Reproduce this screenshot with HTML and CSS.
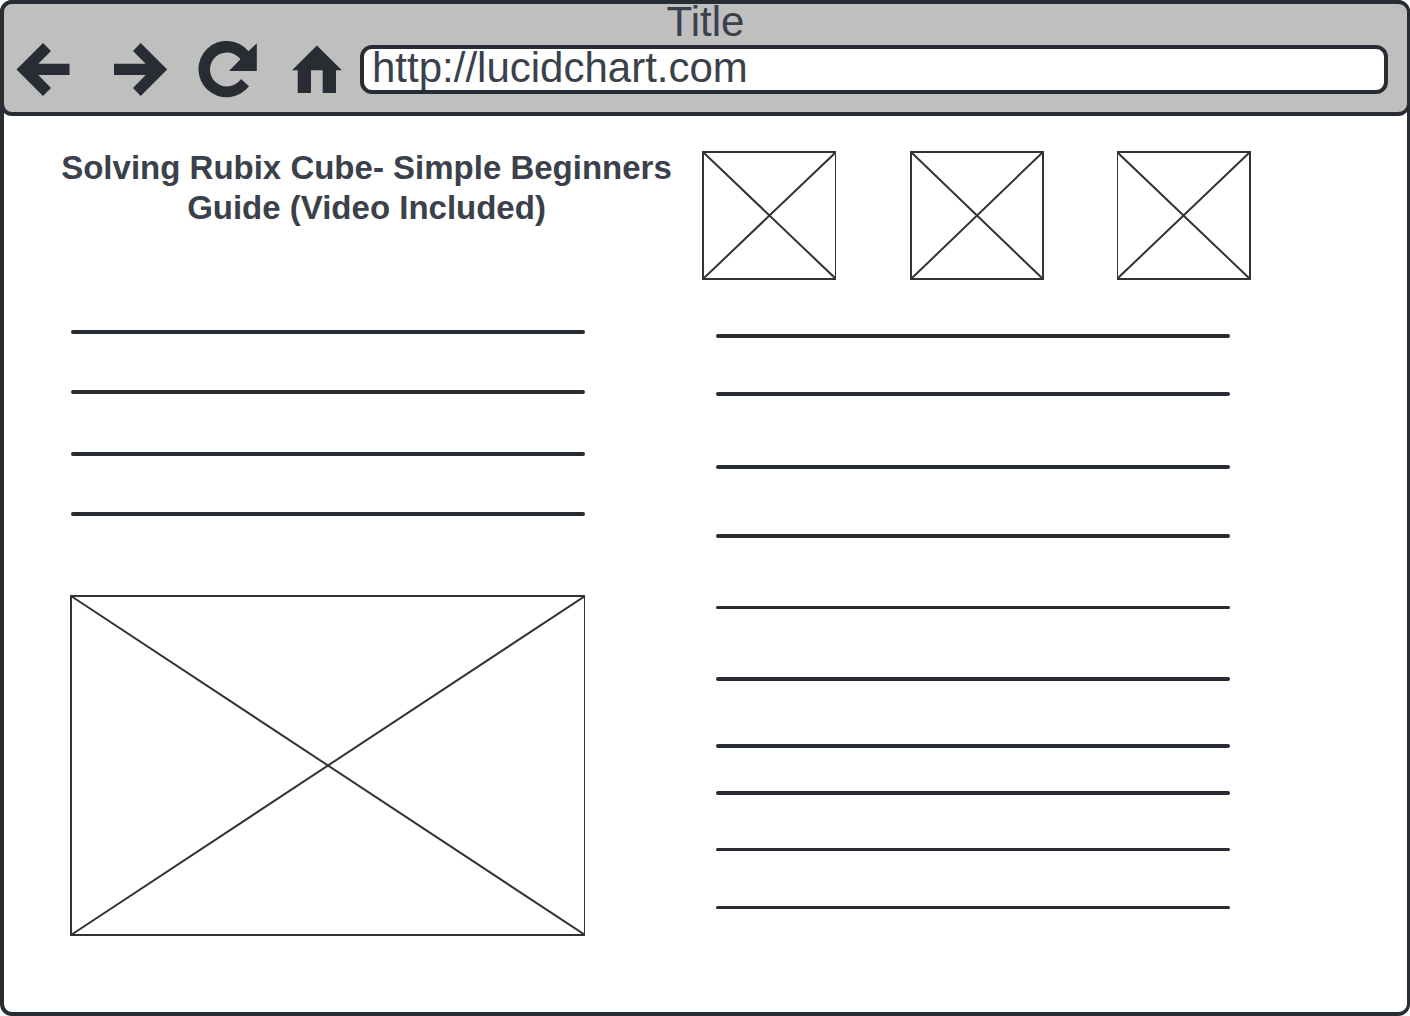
FILE: index.html
```html
<!DOCTYPE html>
<html lang="en">
<head>
<meta charset="utf-8">
<meta name="viewport" content="width=device-width, initial-scale=1">
<title>Title</title>
<link rel="stylesheet" href="styles.css">
</head>
<body>
<div class="window">
  <header class="chrome">
    <div class="chrome-title">Title</div>
    <div class="toolbar">
      <button class="tool tool-back" type="button" aria-label="Back">
        <svg width="54" height="58" viewBox="16 41 54 58"><path d="M16.5 69.5 43 43l8 8-12.700 12.700H69.500V75H38.300L51 88l-8 8z"/></svg>
      </button>
      <button class="tool tool-forward" type="button" aria-label="Forward">
        <svg width="54" height="58" viewBox="114 41 54 58"><path d="M167.200 69.500 140.700 43l-7.700 8 12.700 12.700H114V75h31.700L133 88l7.700 8z"/></svg>
      </button>
      <button class="tool tool-reload" type="button" aria-label="Reload">
        <svg width="60" height="58" viewBox="198 41 60 58"><path d="M248.500 51.300A28.200 28.200 0 1 0 249 86.300L241 79l-1.600 2.100A17 17 0 1 1 240.500 59.200L229 71h27.800V43.300z"/></svg>
      </button>
      <button class="tool tool-home" type="button" aria-label="Home">
        <svg width="50" height="58" viewBox="292 41 50 58"><path d="M316.900 45.500 341.800 70.300H336V93H322.700V70.300H311V93H297.700V70.300H292z"/></svg>
      </button>
      <input class="address" type="text" aria-label="Address" value="http://lucidchart.com" spellcheck="false">
    </div>
  </header>

  <main class="page">
    <section class="article">
      <h1 class="headline">Solving Rubix Cube- Simple Beginners Guide (Video Included)</h1>
      <div class="lines lines-intro">
        <hr><hr><hr><hr>
      </div>
      <svg class="video" viewBox="0 0 515 341" role="img" aria-label="Video placeholder">
        <path d="M1 1H515V340H1zL515 340M1 340 515 1"/>
      </svg>
    </section>

    <section class="aside">
      <div class="thumbs">
        <svg class="thumb" viewBox="0 0 134 129" role="img" aria-label="Image placeholder"><path d="M1 1H134V128H1zL134 128M1 128 134 1"/></svg>
        <svg class="thumb" viewBox="0 0 134 129" role="img" aria-label="Image placeholder"><path d="M1 1H133V128H1zL133 128M1 128 133 1"/></svg>
        <svg class="thumb" viewBox="0 0 134 129" role="img" aria-label="Image placeholder"><path d="M0 1H133V128H0zL133 128M0 128 133 1"/></svg>
      </div>
      <div class="lines lines-body">
        <hr><hr><hr><hr><hr class="thin"><hr><hr><hr><hr class="thin"><hr class="thin">
      </div>
    </section>
  </main>
</div>
</body>
</html>
```
FILE: styles.css
```css
:root {
  --ink: #282c33;
  --text: #3a414a;
  --outline: #333333;
}

* {
  box-sizing: border-box;
}

body {
  margin: 0;
  background: #ffffff;
  color: var(--text);
  font-family: "Liberation Sans", Arial, sans-serif;
}

.window {
  min-height: 100vh;
  border: 4px solid var(--ink);
  border-right-width: 3px;
  border-radius: 12px;
}

/* The bar's frame sits on top of the window frame */
.chrome {
  margin: -4px -3px 0 -4px;
  padding-bottom: 13px;
  border: 4px solid var(--ink);
  border-right-width: 3px;
  border-radius: 12px;
  background: #bfbfbf;
}

.chrome-title {
  font-size: 42px;
  line-height: 35px;
  text-align: center;
}

.toolbar {
  display: flex;
  align-items: center;
  margin-top: 2px;
  padding: 0 19px 0 12px;
}

.tool {
  flex: none;
  padding: 0;
  border: 0;
  background: none;
  cursor: pointer;
}

.tool svg {
  display: block;
  fill: var(--ink);
}

.tool-back {
  margin-right: 44px;
}

.tool-forward {
  margin-right: 30px;
}

.tool-reload {
  margin-right: 34px;
}

.tool-home {
  margin-right: 18px;
}

.address {
  flex: 1;
  min-width: 0;
  height: 49px;
  margin: 0 0 1px;
  padding: 0 8px 4px;
  border: 4px solid var(--ink);
  border-radius: 12px;
  background: #ffffff;
  color: var(--text);
  font: 42px/35px "Liberation Sans", Arial, sans-serif;
}

.page {
  display: grid;
  grid-template-columns: 619fr 549fr;
  column-gap: 26px;
  padding: 32px 156px 76px 53px;
}

.headline {
  margin: 0;
  font-size: 33px;
  line-height: 40px;
  text-align: center;
}

.lines {
  display: grid;
}

.lines hr {
  width: 100%;
  height: 4px;
  margin: 0;
  border: 0;
  border-radius: 2px;
  background: var(--ink);
}

.lines .thin {
  height: 3px;
}

.lines-intro {
  grid-template-rows: 60px 62px 60px 4px;
  margin: 102px 91px 0 14px;
}

.lines-body {
  grid-template-rows: 58px 73px 69px 72px 71px 67px 47px 57px 58px 3px;
  margin: 54px 21px 0 14px;
}

.video,
.thumb {
  display: block;
  fill: none;
  stroke: var(--outline);
  stroke-width: 2px;
}

.video {
  width: calc(100% - 104px);
  margin: 79px 0 0 13px;
}

.thumbs {
  display: flex;
  justify-content: space-between;
  margin-top: 3px;
}

.thumb {
  width: 134px;
}
```
